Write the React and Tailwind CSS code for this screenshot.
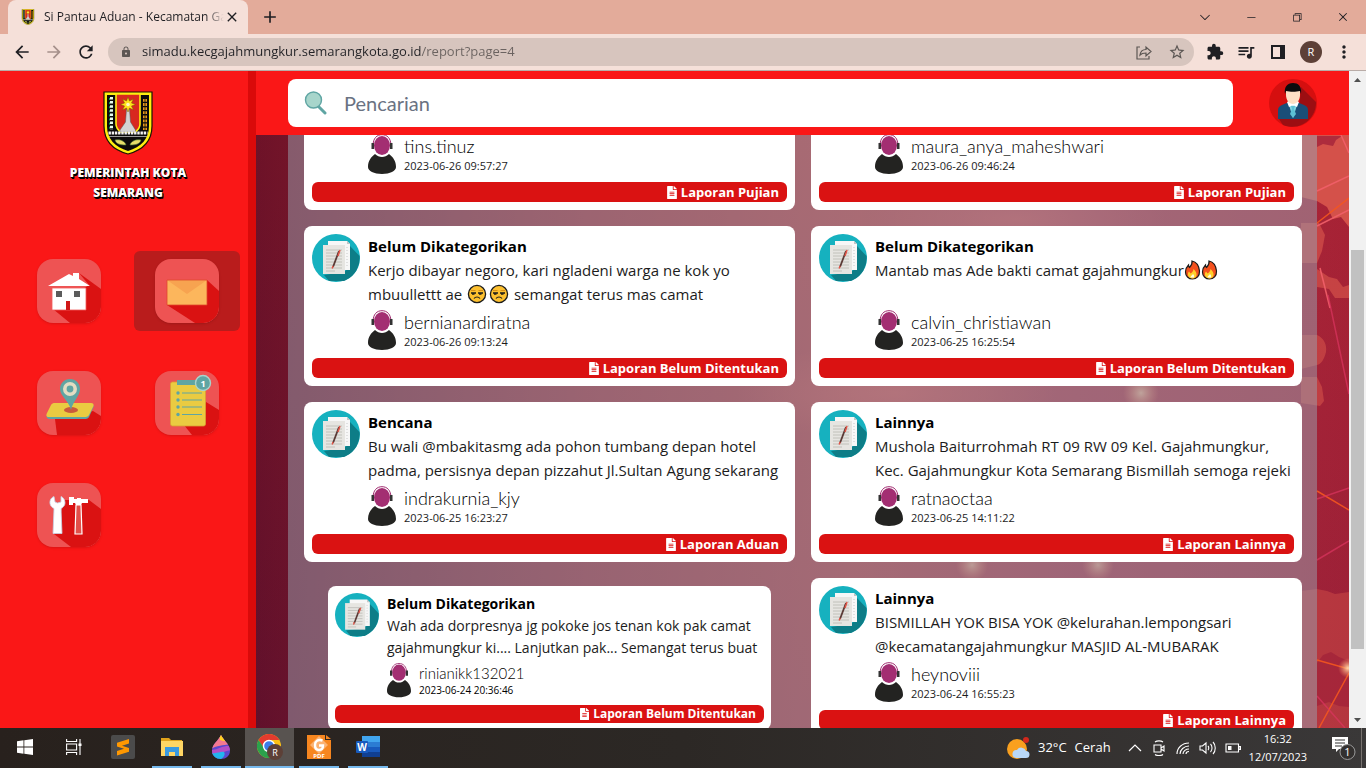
import { useLayoutEffect, useRef } from 'react';
import {
  MdArrowBack,
  MdArrowForward,
  MdRefresh,
  MdLock,
  MdExtension,
  MdQueueMusic,
  MdStarBorder,
  MdMoreVert,
  MdClose,
  MdAdd,
} from 'react-icons/md';
import { FaFileAlt } from 'react-icons/fa';
import { VscChromeMinimize, VscChromeRestore, VscChromeClose, VscChevronDown } from 'react-icons/vsc';

const CityCrest = ({ className }) => (
  <svg viewBox="0 0 50 64" className={className} aria-hidden="true">
    <path d="M1 1h48v34c0 15-9 24-24 28C10 59 1 50 1 35z" fill="#ffee10" stroke="#1a1400" strokeWidth="1.2" />
    <path d="M4 4h42v31c0 13-8 21-21 25C12 56 4 48 4 35z" fill="#0b0b0b" />
    <path d="M13 3h24v30c0 4-2 6-5 8H18c-3-2-5-4-5-8z" fill="#d8281f" stroke="#ffee10" strokeWidth="1.6" />
    <path d="M8.500 6v33" stroke="#e8fff0" strokeWidth="3" strokeDasharray="2.500 1.600" />
    <path d="M6.500 7v32" stroke="#11a05a" strokeWidth="1" strokeDasharray="2 2.100" />
    <path d="M42 8v31" stroke="#e69a1c" strokeWidth="4" strokeDasharray="2.800 1.300" />
    <path d="M42 8v31" stroke="#0b0b0b" strokeWidth="0.800" />
    <path d="M23.500 18h3l1 13 5 8v2H17v-2l5.500-8z" fill="#d3d3d3" stroke="#555" strokeWidth="0.500" />
    <path d="m25 6 1.500 4 4-2-2 4 4 1.500-4 1.500 2 4-4-2L25 21l-1.500-4-4 2 2-4-4-1.500 4-1.500-2-4 4 2z" fill="#ffe21a" stroke="#7a5200" strokeWidth="0.500" />
    <circle cx="25" cy="13.500" r="1.800" fill="#fff7c0" />
    <path d="M5.500 42h39" stroke="#f3f3f3" strokeWidth="3" strokeDasharray="2.400 0.800" />
    <path d="M6 45.500h38" stroke="#9b9b9b" strokeWidth="1.200" />
    <path d="M12 49c5-1 10 1 11 5-6 0-10-1-11-5zM38 49c-5-1-10 1-11 5 6 0 10-1 11-5z" fill="#e7dd6a" stroke="#4c7a35" strokeWidth="0.600" />
  </svg>
);

const HouseArt = () => (
  <>
    <path d="M42 14 64 30v18c0 9-7 16-16 16H33L16 50l36-24z" fill="#da1212" />
    <path d="M11 27 32 15l4 2v-3h6v6l11 7z" fill="#fff" />
    <path d="M15 29h34v22H15z" fill="#fff" stroke="#f05a5a" strokeWidth="0.800" />
    <path d="M19 32h6v6h-6zM37 32h6v6h-6z" fill="#5b5b5b" />
    <path d="M29 42h4v9h-4z" fill="#d01717" />
  </>
);

const MailArt = () => (
  <>
    <path d="m52 21 12 11v16c0 9-7 16-16 16h-8L12 46z" fill="#da1212" />
    <path d="M12 21h40v25H12z" fill="#fcb65c" />
    <path d="M12 21h40L32 35z" fill="#f7a350" />
    <path d="M12 21h40v25H12z" fill="none" stroke="#e0482c" strokeWidth="0.800" />
  </>
);

const MapArt = () => (
  <>
    <path d="m56 40 8 5v3c0 9-7 16-16 16H20l-2-16z" fill="#da1212" />
    <path d="M18 33h36c2 0 3 1.500 2.500 3l-4 9c-.7 2-2 3-4 3H13c-3 0-4-2-3-4z" fill="#5fa5a3" />
    <path d="M18 32h36c2 0 3 1 2.500 3l-4 8c-.7 2-2 3-4 3H12c-3 0-3-2-2-4l4-8c1-1.500 2-2 4-2z" fill="#eacb41" />
    <ellipse cx="34" cy="39" rx="7" ry="3" fill="#ca5a3c" />
    <path d="M33 8c6 0 10 4.500 10 10 0 7-7 12-9 21-2-9-11-14-11-21 0-5.500 4-10 10-10z" fill="#5fa5a3" />
    <circle cx="33" cy="18" r="5.200" fill="none" stroke="#e3dcc2" strokeWidth="3.600" />
  </>
);

const ListArt = () => (
  <>
    <path d="m51 31 13 8v9c0 9-7 16-16 16H37L29 54z" fill="#da1212" />
    <rect x="15.500" y="11" width="35" height="44" rx="2" fill="#eacb41" stroke="#d9a032" strokeWidth="0.800" />
    <path d="M22 9h22v5H22z" fill="#5fa5a3" />
    <path d="M27 22h20M27 29h20M27 36h20M27 43.500h20" stroke="#5fa5a3" strokeWidth="1.200" />
    <g fill="#5fa5a3">
      <circle cx="23" cy="22" r="1.700" />
      <circle cx="23" cy="29" r="1.700" />
      <circle cx="23" cy="36" r="1.700" />
      <circle cx="23" cy="43.500" r="1.700" />
    </g>
    <circle cx="48" cy="12" r="7.500" fill="#5fa5a3" stroke="#a9d3cb" strokeWidth="1.400" />
    <text x="48" y="15.500" textAnchor="middle" fontSize="9" fontWeight="700" fill="#fff" fontFamily="Open Sans, sans-serif">1</text>
  </>
);

const ToolsArt = () => (
  <>
    <path d="m28 17 24 0 12 9v22c0 9-7 16-16 16H34L17 51z" fill="#da1212" />
    <path d="M17 13.500c-3 1-4.500 4-4 7 .4 2.500 2 4 4 5l-1 25h9l-1-25c2-1 4-3 4-5.500 0-3-1.500-5.500-4-6.500v5.500L20.500 20 18 19z" fill="#fff" stroke="#c5d3e6" strokeWidth="0.800" />
    <path d="M39 22h5l1 29h-7z" fill="#e2504a" stroke="#fff" strokeWidth="1.200" />
    <path d="M32 14h5v2h3v-1h4v1h7v4h-6l-1 2h-5l-1-2h-2v2h-4z" fill="#fff" />
  </>
);

const Tile = ({ children }) => (
  <svg viewBox="0 0 64 64" className="size-16 rounded-2xl bg-[#ee5353] shadow-sm" aria-hidden="true">
    {children}
  </svg>
);

const menu = [
  { label: 'Beranda', art: <HouseArt /> },
  { label: 'Laporan', art: <MailArt />, active: true },
  { label: 'Peta', art: <MapArt /> },
  { label: 'Daftar', art: <ListArt /> },
  { label: 'Pengaturan', art: <ToolsArt /> },
];

const DocIcon = ({ className }) => (
  <svg viewBox="0 0 48 48" className={className} aria-hidden="true">
    <circle cx="24" cy="24" r="24" fill="#16b1bf" />
    <path d="M38 12l9.500 10A24 24 0 0 1 34 46l-2 1-15 0L12 41l20-3 5-4z" fill="#0d7d87" />
    <path d="M16 7h19l3 3v26H16z" fill="#f7f7f7" />
    <path d="M35 7v3h3z" fill="#c4c4c4" />
    <path d="M35 13v20" stroke="#c9c9c9" strokeDasharray="1 2" />
    <path d="M11 11h22v29H11z" fill="#e6e5e1" />
    <path d="M14 16h16M14 19h16M14 22h16M14 25h16M14 28h16M14 31h16M14 34h16M14 37h9" stroke="#bdbcb7" strokeWidth="0.900" />
    <path d="M27 17 21 33" stroke="#5a3a36" strokeWidth="1.800" />
    <path d="m28 16-2 6M21 32l-.8 2.500" stroke="#e25548" strokeWidth="1.500" />
  </svg>
);

const Reporter = ({ className }) => (
  <svg viewBox="0 0 28 40" className={className} aria-hidden="true">
    <path d="M5 12C5 4 9 .7 14 .7S23 4 23 12" fill="none" stroke="#a02c70" strokeWidth="1" />
    <ellipse cx="14" cy="11.500" rx="8" ry="9.500" fill="#a32e72" />
    <path d="M3.500 9H6v6H3.500zM22 9h2.500v6H22z" fill="#333" />
    <path d="M7 20c4 4 10 4 14 0 4 3 7 7 7 13 0 4-6 7-14 7S0 37 0 33c0-6 3-10 7-13z" fill="#232321" />
  </svg>
);

const Unamused = () => (
  <svg viewBox="0 0 20 20" className="mx-px inline size-5 align-text-bottom" role="img" aria-label="unamused">
    <circle cx="10" cy="10" r="8.600" fill="#fdc02f" stroke="#1b1b1b" strokeWidth="1.300" />
    <path d="M4 6.500h4.500M11.500 6.500H16" stroke="#d18a16" strokeWidth="0.900" />
    <path d="M4 9h5M11 9h5" stroke="#1b1b1b" strokeWidth="1.300" />
    <path d="M5 10h2.500M12 10h2.500" stroke="#1b1b1b" strokeWidth="1.600" />
    <path d="M7 14.500c1.500-2 4.500-2 6 0" fill="none" stroke="#1b1b1b" strokeWidth="1.200" />
  </svg>
);

const Fire = () => (
  <svg viewBox="0 0 17 20" className="inline h-5 align-text-bottom" role="img" aria-label="fire">
    <path d="M8 1c5 1 7 5 7.500 10 .3 5-3 8-7 8S1.500 16 1.500 12c0-3 1-5 3-7 0 1 .3 2 1 2.500C7 6 8.500 4 8 1z" fill="#f4511e" stroke="#1b1b1b" strokeWidth="1.200" />
    <path d="M9.500 9c2 2 3.500 4 3 6.500-.5 2-2 3-4 3s-4-1-4.500-3c-.3-1.500.2-3 1-4l1.500 2c1.500-1 2.800-2.500 3-4.500z" fill="#ffd02a" />
    <path d="M9 14c1 1 1.500 2 1 3.500H6.500C6.500 16 8 15.500 9 14z" fill="#fffbe0" />
  </svg>
);

const reports = [
  {
    category: '',
    lines: ['', ''],
    user: 'tins.tinuz',
    date: '2023-06-26 09:57:27',
    type: 'Laporan Pujian',
  },
  {
    category: '',
    lines: ['', ''],
    user: 'maura_anya_maheshwari',
    date: '2023-06-26 09:46:24',
    type: 'Laporan Pujian',
  },
  {
    category: 'Belum Dikategorikan',
    lines: [
      'Kerjo dibayar negoro, kari ngladeni warga ne kok yo',
      <>mbuullettt ae <Unamused /><Unamused /> semangat terus mas camat</>,
    ],
    user: 'bernianardiratna',
    date: '2023-06-26 09:13:24',
    type: 'Laporan Belum Ditentukan',
  },
  {
    category: 'Belum Dikategorikan',
    lines: [<>Mantab mas Ade bakti camat gajahmungkur<Fire /><Fire /></>, ''],
    user: 'calvin_christiawan',
    date: '2023-06-25 16:25:54',
    type: 'Laporan Belum Ditentukan',
  },
  {
    category: 'Bencana',
    lines: [
      'Bu wali @mbakitasmg ada pohon tumbang depan hotel',
      'padma, persisnya depan pizzahut Jl.Sultan Agung sekarang',
    ],
    user: 'indrakurnia_kjy',
    date: '2023-06-25 16:23:27',
    type: 'Laporan Aduan',
  },
  {
    category: 'Lainnya',
    lines: [
      'Mushola Baiturrohmah RT 09 RW 09 Kel. Gajahmungkur,',
      'Kec. Gajahmungkur Kota Semarang Bismillah semoga rejeki',
    ],
    user: 'ratnaoctaa',
    date: '2023-06-25 14:11:22',
    type: 'Laporan Lainnya',
  },
  {
    category: 'Belum Dikategorikan',
    lines: [
      'Wah ada dorpresnya jg pokoke jos tenan kok pak camat',
      'gajahmungkur ki.... Lanjutkan pak... Semangat terus buat',
    ],
    user: 'rinianikk132021',
    date: '2023-06-24 20:36:46',
    type: 'Laporan Belum Ditentukan',
    pressed: true,
  },
  {
    category: 'Lainnya',
    lines: [
      'BISMILLAH YOK BISA YOK @kelurahan.lempongsari',
      '@kecamatangajahmungkur MASJID AL-MUBARAK',
    ],
    user: 'heynoviii',
    date: '2023-06-24 16:55:23',
    type: 'Laporan Lainnya',
  },
];

const ReportCard = ({ report }) => (
  <article className="h-40 rounded-lg bg-white p-2 text-black">
    <div className="flex gap-2">
      <DocIcon className="size-12 shrink-0" />
      <div className="min-w-0 flex-1 whitespace-nowrap">
        <h2 className="h-6 text-[15px] leading-6 font-bold">{report.category}</h2>
        {report.lines.map((line, i) => (
          <p key={i} className="h-6 text-[15px] leading-6 text-[#1c1c1c]">{line}</p>
        ))}
        <div className="flex gap-2 pt-1">
          <Reporter className="h-10 w-7" />
          <div>
            <p className="font-[Lato] text-[18px] leading-6 font-light">{report.user}</p>
            <p className="text-[11px] leading-4 text-[#1c1c1c]">{report.date}</p>
          </div>
        </div>
      </div>
    </div>
    <div className="mt-2 flex h-5 items-center justify-end gap-1 rounded-md bg-[#da1212] px-2 text-white">
      <FaFileAlt className="h-[13px] w-[10px]" />
      <span className="text-[13px] leading-5 font-bold">{report.type}</span>
    </div>
  </article>
);

const PressedCard = ({ report }) => (
  <article className="mx-6 mt-2 h-36 rounded-lg bg-white p-[7px] text-black">
    <div className="flex gap-2">
      <DocIcon className="size-11 shrink-0" />
      <div className="min-w-0 flex-1 whitespace-nowrap">
        <h2 className="text-[14px] leading-[22px] font-bold">{report.category}</h2>
        {report.lines.map((line, i) => (
          <p key={i} className="h-[22px] text-[14px] leading-[22px] text-[#1c1c1c]">{line}</p>
        ))}
        <div className="flex gap-2 pt-[3px]">
          <Reporter className="h-9 w-6" />
          <div>
            <p className="font-[Lato] text-[15px] leading-[22px] font-light">{report.user}</p>
            <p className="text-[10px] leading-3">{report.date}</p>
          </div>
        </div>
      </div>
    </div>
    <div className="mt-[7px] flex h-[18px] items-center justify-end gap-1 rounded-md bg-[#da1212] px-2 text-white">
      <FaFileAlt className="h-3 w-[9px]" />
      <span className="text-[12px] leading-4 font-bold">{report.type}</span>
    </div>
  </article>
);

const BrowserBar = () => (
  <header className="shrink-0 bg-[#e3ab9a] text-[#1f1f23]">
    <div className="flex h-[34px] items-stretch pl-2">
      <div className="flex w-60 items-center rounded-t-lg bg-[#f5e0d9] pr-2 pl-3">
        <CityCrest className="h-4 w-4" />
        <span className="ml-2 min-w-0 flex-1 overflow-hidden text-[12px] whitespace-nowrap [mask-image:linear-gradient(to_right,#000_90%,transparent)]">
          Si Pantau Aduan - Kecamatan Ga
        </span>
        <button type="button" aria-label="Close tab">
          <MdClose className="size-4" />
        </button>
      </div>
      <button type="button" aria-label="New tab" className="ml-3">
        <MdAdd className="size-5" />
      </button>
      <div className="ml-auto flex items-center">
        <button type="button" aria-label="Search tabs" className="flex w-[46px] justify-center"><VscChevronDown className="size-4" /></button>
        <button type="button" aria-label="Minimize" className="flex w-[46px] justify-center"><VscChromeMinimize className="size-3" /></button>
        <button type="button" aria-label="Restore" className="flex w-[46px] justify-center"><VscChromeRestore className="size-3" /></button>
        <button type="button" aria-label="Close" className="flex w-[46px] justify-center"><VscChromeClose className="size-3" /></button>
      </div>
    </div>
    <div className="flex h-[37px] items-center border-b border-[#b9aca7] bg-[#f5e0d9] pl-3">
      <button type="button" aria-label="Back"><MdArrowBack className="size-5" /></button>
      <button type="button" aria-label="Forward" className="ml-3 text-[#a5908b]"><MdArrowForward className="size-5" /></button>
      <button type="button" aria-label="Reload" className="ml-3"><MdRefresh className="size-5" /></button>
      <div className="ml-3 flex h-7 flex-1 items-center rounded-full bg-[#d7c5be] px-3 text-[#5c5653]">
        <MdLock className="size-3" />
        <input
          type="text"
          aria-label="Address"
          defaultValue="simadu.kecgajahmungkur.semarangkota.go.id/report?page=4"
          className="ml-[10px] min-w-0 flex-1 bg-[linear-gradient(to_right,#222226_279px,#6b6360_279px)] bg-clip-text text-[13px] text-transparent outline-none"
        />
        <button type="button" aria-label="Share">
          <svg viewBox="0 0 16 16" className="size-4" fill="none" stroke="currentColor" strokeWidth="1.200">
            <path d="M4 3H1v12h12v-3M4 11c.5-4 3-5.500 6-5.500V3l5 4.500L10 12V9c-2.500 0-4.500.3-6 2z" />
          </svg>
        </button>
        <button type="button" aria-label="Bookmark" className="ml-4 -mr-1"><MdStarBorder className="size-[18px]" /></button>
      </div>
      <div className="flex items-center gap-3 px-3">
        <button type="button" aria-label="Extensions"><MdExtension className="size-[18px]" /></button>
        <button type="button" aria-label="Media"><MdQueueMusic className="size-5" /></button>
        <button type="button" aria-label="Side panel">
          <svg viewBox="0 0 20 20" className="size-5"><path fillRule="evenodd" d="M3 3h14v14H3zM5 5v10h7V5z" fill="currentColor" /></svg>
        </button>
        <button type="button" aria-label="Profile" className="size-[22px] rounded-full bg-[#5d4037] text-[11px] text-white">R</button>
        <button type="button" aria-label="Menu"><MdMoreVert className="size-5" /></button>
      </div>
    </div>
  </header>
);

const Sidebar = () => (
  <aside className="w-64 shrink-0 border-r-8 border-[#da0a0a] bg-[#fa1717] pt-5 pr-2 pl-4">
    <CityCrest className="mx-auto h-16" />
    <h1 className="mx-auto mt-2 w-36 text-center text-[12px] leading-5 font-extrabold text-white [text-shadow:1px_1px_0_#000,1px_2px_0_#000,0_1px_0_#000]">
      PEMERINTAH KOTA SEMARANG
    </h1>
    <nav className="mt-12 grid grid-cols-2 gap-x-3 gap-y-8">
      {menu.map((item) => (
        <a
          key={item.label}
          href={`#${item.label.toLowerCase()}`}
          aria-label={item.label}
          className={`flex h-20 items-center justify-center rounded-md ${item.active ? 'bg-[#b91c1c]' : ''}`}
        >
          <Tile>{item.art}</Tile>
        </a>
      ))}
    </nav>
  </aside>
);

const TopBar = () => (
  <div className="flex h-16 shrink-0 items-center gap-9 bg-[#fa1717] px-8">
    <label className="flex h-12 flex-1 items-center rounded-lg bg-white pl-4">
      <svg viewBox="0 0 24 24" className="size-6" aria-hidden="true">
        <path d="m14 15 7 7" stroke="#5fa5a3" strokeWidth="3" strokeLinecap="round" />
        <circle cx="9.500" cy="9" r="8" fill="#a7d5cb" stroke="#5fa5a3" strokeWidth="1.400" />
      </svg>
      <input
        type="text"
        placeholder="Pencarian"
        aria-label="Pencarian"
        className="ml-4 min-w-0 flex-1 font-[Lato] text-[20px] outline-none placeholder:text-gray-500"
      />
    </label>
    <button type="button" aria-label="Akun">
      <svg viewBox="0 0 48 48" className="size-12">
        <circle cx="24" cy="24" r="24" fill="#d50f0f" />
        <path d="m32 8 15 15a24 24 0 0 1-33 23l-4-6 20-8z" fill="#9c0e12" />
        <path d="M9 40V31c0-3 2-4 4-5l7-3h8l7 3c2 1 4 2 4 5v9z" fill="#1a4e78" />
        <path d="m19 23 5 2 5-2-5 16z" fill="#84d5e2" />
        <path d="m18 23 6 4 6-4-2-1h-8zM18 23l2 5 4-2 4 2 2-5z" fill="#fff" />
        <path d="M22 27h4l-1 3 2 5-3 4-3-4 2-5z" fill="#5cc0d4" />
        <path d="M17 9h14v7c0 5-3 9-7 9s-7-4-7-9z" fill="#fde0c5" />
        <path d="M16 15c-1-7 2-11 8-11 5 0 9 3 8 11l-1-3c-4 1-10 1-14 0z" fill="#0b0b0d" />
      </svg>
    </button>
  </div>
);

const Backdrop = () => (
  <svg viewBox="0 0 1093 593" preserveAspectRatio="none" className="absolute inset-0 size-full" aria-hidden="true">
    <defs>
      <linearGradient id="base">
        <stop offset="0" stopColor="#67122a" />
        <stop offset="0.300" stopColor="#a62b36" />
        <stop offset="0.550" stopColor="#c63e3f" />
        <stop offset="0.750" stopColor="#b83145" />
        <stop offset="1" stopColor="#b0263a" />
      </linearGradient>
      <linearGradient id="shade" x2="0" y2="1">
        <stop offset="0" stopColor="#8a1420" stopOpacity="0.200" />
        <stop offset="1" stopColor="#4c0a30" stopOpacity="0.220" />
      </linearGradient>
      <radialGradient id="glow">
        <stop offset="0" stopColor="#f0605a" />
        <stop offset="1" stopColor="#f0605a" stopOpacity="0" />
      </radialGradient>
      <radialGradient id="spark">
        <stop offset="0" stopColor="#ffd9a8" />
        <stop offset="1" stopColor="#ff9060" stopOpacity="0" />
      </radialGradient>
    </defs>
    <path d="M0 0h1093v593H0z" fill="url(#base)" />
    <path d="M0 0h1093v593H0z" fill="url(#shade)" />
    <ellipse cx="760" cy="84" rx="150" ry="40" fill="url(#glow)" opacity="0.400" />
    <ellipse cx="640" cy="258" rx="160" ry="50" fill="url(#glow)" opacity="0.400" />
    <circle cx="885" cy="258" r="18" fill="url(#spark)" opacity="0.700" />
    <circle cx="716" cy="430" r="16" fill="url(#spark)" opacity="0.600" />
    <circle cx="842" cy="430" r="16" fill="url(#spark)" opacity="0.600" />
    <g fill="#d4514a">
      <path d="M1045 0h48v92l-8-10-8 2-6-12-10-6-16-4z" />
      <path d="M1045 88h18l6 12-3 16-5 12h-16z" opacity="0.700" />
      <path d="M1061 134l12 8 8 2 6 8 6-2v13h-14l-6-9-12-2z" opacity="0.700" />
      <path d="M1045 200h16c7 3 10 10 9 17-2 8-5 12-9 13l-16 4zM1045 242h16l5 10 2 14-4 5-19-3z" opacity="0.600" />
      <path d="M1045 456l16-2 10 2 8 3 14-2v136h-48z" opacity="0.450" />
    </g>
    <g fill="#a3233a" opacity="0.800">
      <path d="M1061 1h25l-6 4-3 6-10-2-6 3z" />
      <path d="M1061 528l6-8 8-3 8 5 10 4v46l-10-1-10-4-12 4z" />
    </g>
    <path d="M1061 88l32-25M1061 356l32 19M1061 525l32 9M1063 593l30-55" stroke="#f4561f" strokeWidth="1.500" opacity="0.900" />
    <path d="M1061 56l32-15M1085 0l8 18M1064 133l10 40M1061 91l32-16" stroke="#f2606a" strokeWidth="1.500" opacity="0.900" />
    <path d="M1072 160l21 99M1061 364l32-11M1061 425l32-19M1061 561l28 32" stroke="#dc3560" strokeWidth="1.500" opacity="0.700" />
    <circle cx="1092" cy="533" r="10" fill="url(#spark)" />
  </svg>
);

const Scrollbar = () => (
  <div className="flex w-[17px] shrink-0 flex-col bg-[#f1f1f1] px-[2px]" aria-hidden="true">
    <svg viewBox="0 0 13 17" className="h-[17px]"><path d="M3 11h7L6.500 7z" fill="#505050" /></svg>
    <div className="flex min-h-0 flex-1 flex-col">
      <div className="h-[26%]" />
      <div className="h-[64%] bg-[#c1c1c1]" />
    </div>
    <svg viewBox="0 0 13 17" className="h-[17px]"><path d="M3 7h7l-3.500 4z" fill="#505050" /></svg>
  </div>
);

const WindowsIcon = () => (
  <svg viewBox="0 0 16 16" className="size-4"><path d="M0 2.200 6.500 1.300V7.600H0zM7.300 1.200 16 0v7.600H7.300zM0 8.400h6.500v6.300L0 13.800zM7.300 8.400H16V16l-8.700-1.200z" fill="#fff" /></svg>
);

const TaskViewIcon = () => (
  <svg viewBox="0 0 16 16" className="size-4" fill="none" stroke="#fff" strokeWidth="1.100">
    <path d="M.6 0v2.500h10V0M.6 16v-2.500h10V16M.6 5h10v6H.6zM14 0v16" />
    <path d="M12.500 4.500h3v2.500h-3z" fill="#fff" stroke="none" />
  </svg>
);

const SublimeIcon = () => (
  <svg viewBox="0 0 24 24" className="size-6">
    <rect width="24" height="24" rx="2" fill="#4b4b4b" />
    <path d="M18 4v4.500l-7 2.200 7 2.300v3.800L6 20.500V16l7-2.200-7-2.300V7.700z" fill="#ff9800" />
  </svg>
);

const ExplorerIcon = () => (
  <svg viewBox="0 0 24 24" className="size-6">
    <path d="M1 3h8l2 2h11v4H1z" fill="#e0a21b" />
    <path d="M1 6h22v15H1z" fill="#ffd664" />
    <path d="M5 12h14v9h-4v-4H9v4H5z" fill="#3a9ae0" />
  </svg>
);

const PaintIcon = () => (
  <svg viewBox="0 0 24 24" className="size-6">
    <defs>
      <clipPath id="drop"><path d="M12 0c2 5 9 9 9 15.500C21 21 17 24 12 24s-9-3-9-8.500C3 9 10 5 12 0z" /></clipPath>
    </defs>
    <g clipPath="url(#drop)">
      <path d="M0 0h24v24H0z" fill="#5a48cf" />
      <path d="M0 0h24v7c-6 5-12 1-24 8z" fill="#f47890" />
      <path d="M10 0h6l4 5c-3 2-6 1-9 0z" fill="#ffd21f" />
      <path d="M0 14c8 3 12-5 24-3v4c-11 0-13 7-24 3z" fill="#b34fc6" />
      <path d="M0 17c7 3 11-1 15 0 2 3-1 6-3 7H0z" fill="#22b5ee" />
    </g>
  </svg>
);

const ChromeIcon = () => (
  <svg viewBox="0 0 26 26" className="size-[26px]">
    <circle cx="12" cy="12" r="12" fill="#fbc116" />
    <path d="M1.600 6A12 12 0 0 1 22.400 6H12L7 15z" fill="#e33b2e" />
    <path d="M1.600 6A12 12 0 0 0 12 24l5-9-10-1z" fill="#2ba24c" />
    <circle cx="12" cy="12" r="5.500" fill="#3b7de9" stroke="#fff" strokeWidth="1.400" />
    <circle cx="18" cy="18" r="8" fill="#5d4037" />
    <text x="18" y="21.500" textAnchor="middle" fontSize="9" fill="#fff" fontFamily="Open Sans, sans-serif">R</text>
  </svg>
);

const PdfIcon = () => (
  <svg viewBox="0 0 24 24" className="size-6">
    <path d="M0 0h18v5h6v19H0z" fill="#f7861f" />
    <path d="M19 0l5 4h-5z" fill="#f7861f" />
    <path d="m12 1 9 9-9 9-9-9z" fill="#fbb273" />
    <path d="M15.500 5.500C11 4 8 6 8 10c0 3 1.500 5 4 5s4-1.500 4-4.500h-4" fill="none" stroke="#fff" strokeWidth="2.400" />
    <text x="12" y="23" textAnchor="middle" fontSize="6" fontWeight="700" fill="#fff" fontFamily="Open Sans, sans-serif">PDF</text>
  </svg>
);

const WordIcon = () => (
  <svg viewBox="0 0 24 24" className="size-6">
    <path d="M6 1h18v6H6z" fill="#41a5ee" />
    <path d="M6 7h18v5H6z" fill="#2b7cd3" />
    <path d="M6 12h18v5H6z" fill="#185abd" />
    <path d="M6 17h18v5H6z" fill="#103f91" />
    <rect y="6" width="12" height="12" rx="1" fill="#185abd" />
    <text x="6" y="15.500" textAnchor="middle" fontSize="10" fontWeight="700" fill="#fff" fontFamily="Open Sans, sans-serif">W</text>
  </svg>
);

const apps = [
  { name: 'Start', icon: <WindowsIcon /> },
  { name: 'Task View', icon: <TaskViewIcon /> },
  { name: 'Sublime Text', icon: <SublimeIcon /> },
  { name: 'File Explorer', icon: <ExplorerIcon />, open: true },
  { name: 'Paint 3D', icon: <PaintIcon />, open: true },
  { name: 'Chrome', icon: <ChromeIcon />, open: true, focused: true },
  { name: 'Foxit PDF', icon: <PdfIcon />, open: true },
  { name: 'Word', icon: <WordIcon />, open: true },
];

const Taskbar = () => (
  <footer className="flex h-10 shrink-0 bg-linear-to-r from-[#28211d] via-[#2c2825] to-[#3a3838] text-white">
    {apps.map((app) => (
      <button
        key={app.name}
        type="button"
        aria-label={app.name}
        className={`flex w-[49px] flex-col items-center ${app.focused ? 'bg-[#585350]' : ''}`}
      >
        <span className="flex flex-1 items-center">{app.icon}</span>
        <span className={`h-[2px] ${app.focused ? 'w-full' : 'w-10'} ${app.open ? 'bg-[#76b9ed]' : ''}`} />
      </button>
    ))}
    <div className="ml-auto flex items-center">
      <svg viewBox="0 0 24 24" className="size-6" aria-hidden="true">
        <circle cx="11" cy="13" r="10" fill="#f9a01f" />
        <path d="M10 22h10a3.500 3.500 0 0 0 0-7 5 5 0 0 0-9-1 4 4 0 0 0-1 8z" fill="#b9d8f8" />
        <circle cx="20" cy="4" r="3" fill="#d2281c" />
      </svg>
      <span className="ml-2 flex gap-2 text-[13px]"><span>32°C</span><span>Cerah</span></span>
      <div className="ml-4 flex items-center gap-2">
        <svg viewBox="0 0 16 16" className="size-4" fill="none" stroke="#fff" strokeWidth="1.200"><path d="m2 11 6-6 6 6" /></svg>
        <svg viewBox="0 0 16 16" className="size-4" fill="none" stroke="#fff" strokeWidth="1.100">
          <path d="M4 2c2-1.500 6-1.500 8 0M4 14.500c2 1.500 6 1.500 8 0M3 5h7v7H3zM10 8l3-2v5l-3-2" />
        </svg>
        <svg viewBox="0 0 16 16" className="size-4" fill="none" stroke="#fff" strokeWidth="1.100">
          <path d="M2 14C2 8 7 3 14 3M5 14c0-4 4-8 9-8M8 14c0-3 3-5 6-5M11 14c0-1.500 1.500-2.500 3-2.500" />
        </svg>
        <svg viewBox="0 0 18 16" className="h-4 w-[18px]" fill="none" stroke="#fff" strokeWidth="1.100">
          <path d="M1 6h2.500L7 3v10l-3.500-3H1zM9 6c1 1 1 3 0 4M11.500 4c2 2 2 6 0 8M14 2c3 3 3 9 0 12" />
        </svg>
        <svg viewBox="0 0 16 16" className="size-4" fill="none" stroke="#fff" strokeWidth="1.100">
          <path d="M1 4h12.500v8H1zM14 6.500h1.500v3H14z" /><path d="M3 6h3.500v4H3z" fill="#fff" stroke="none" />
        </svg>
      </div>
      <div className="ml-2 text-center text-[11px] leading-[18px]">
        <p>16:32</p>
        <p>12/07/2023</p>
      </div>
      <button type="button" aria-label="Notifications" className="ml-6">
        <svg viewBox="0 0 26 26" className="size-[26px]">
          <path d="M1 2h16v12H8l-3 3v-3H1z" fill="#fff" />
          <path d="M4 5h10M4 8h10M4 11h7" stroke="#333" />
          <circle cx="16.500" cy="17" r="7.500" fill="#33302f" stroke="#9a9a9a" />
          <text x="16.500" y="21" textAnchor="middle" fontSize="11" fill="#fff" fontFamily="Open Sans, sans-serif">1</text>
        </svg>
      </button>
      <span className="mx-1 h-10 border-l border-[#77726f]" />
    </div>
  </footer>
);

const App = () => {
  const listRef = useRef(null);

  // the list opens part way down, with the first row tucked under the search bar
  useLayoutEffect(() => {
    listRef.current.scrollTop = 101;
  }, []);

  return (
    <div className="flex h-screen flex-col overflow-hidden font-['Open_Sans','Noto_Sans',sans-serif]">
      <BrowserBar />
      <div className="flex min-h-0 flex-1">
        <Sidebar />
        <main className="flex min-w-0 flex-1 flex-col">
          <TopBar />
          <div className="relative min-h-0 flex-1 bg-[#8e1f30]">
            <Backdrop />
            <div ref={listRef} className="relative h-full overflow-y-auto px-8 [scrollbar-width:none]">
              <section className="grid grid-cols-2 gap-4 bg-gray-400/50 p-4 pr-[15px]">
                {reports.map((report) =>
                  report.pressed ? (
                    <PressedCard key={report.date} report={report} />
                  ) : (
                    <ReportCard key={report.date} report={report} />
                  )
                )}
              </section>
            </div>
          </div>
        </main>
        <Scrollbar />
      </div>
      <Taskbar />
    </div>
  );
};

export default App;
